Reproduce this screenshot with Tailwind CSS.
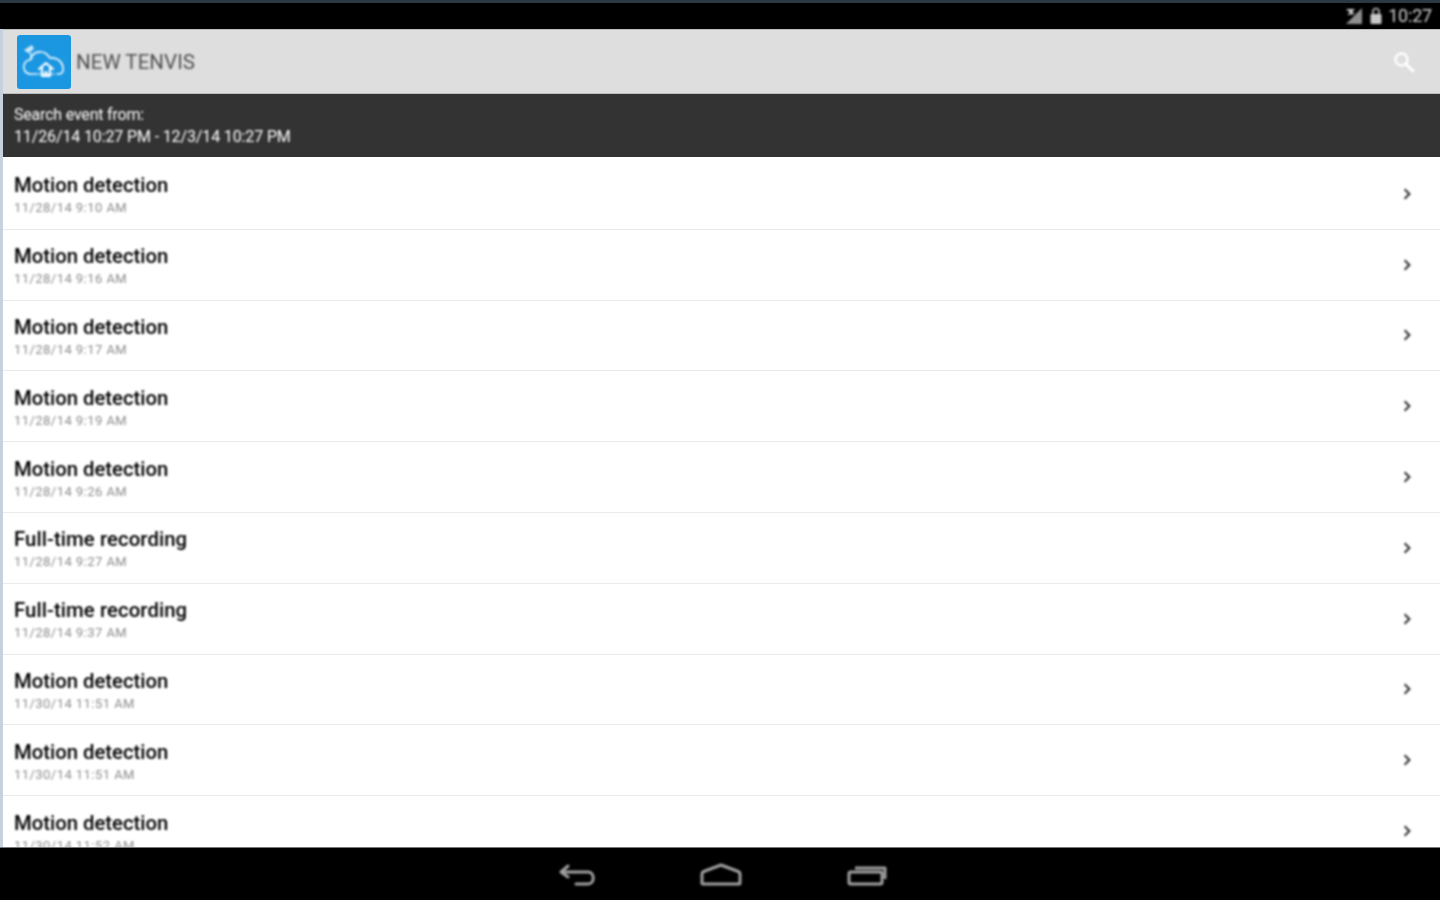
<!doctype html>
<html>
<head>
<meta charset="utf-8">
<script src="https://cdn.jsdelivr.net/npm/@tailwindcss/browser@4"></script>
</head>
<body class="m-0 bg-black">
<div class="flex h-[900px] w-[1440px] flex-col overflow-hidden bg-black font-['Roboto',sans-serif]">
  <div class="flex h-[29px] shrink-0 items-center justify-end gap-[5px] border-t-[3px] border-[#2c3842] bg-black pr-[8px]">
    <svg class="blur-[0.8px]" width="20" height="18" viewBox="0 0 20 18"><path d="M18 1v16H2z" fill="#8f8f8f"/><path d="M2 2h9l-3 3 3 2-8 1 3-2.5z" fill="#d0d0d0"/></svg>
    <svg class="blur-[0.8px]" width="14" height="18" viewBox="0 0 14 18"><path d="M4 7V4.5a3 3 0 0 1 6 0V7" fill="none" stroke="#bbb" stroke-width="1.6"/><rect x="1.5" y="7" width="11" height="10" rx="1" fill="#c8c8c8"/></svg>
    <span class="text-[18px] leading-none tracking-[-0.2px] text-[#d0d0d0] blur-[0.8px]">10:27</span>
  </div>
  <div class="flex">
    <div class="w-[3px] shrink-0 bg-[#c6d1dd]"></div>
    <div class="flex h-[818px] min-w-0 flex-1 flex-col">
      <div class="flex h-[65px] shrink-0 items-center border-y border-[#bdbdbd] bg-[#dedede] pl-[14px] pr-[24px]">
        <div class="flex h-[54px] w-[54px] shrink-0 items-center justify-center rounded-[3px] bg-[#1b97e2]">
          <svg class="blur-[0.8px]" width="46" height="40" viewBox="0 0 46 40" fill="none" stroke="#eef8fd" stroke-width="1.6" stroke-linecap="round" stroke-linejoin="round">
            <path d="M15 32H10C4 32 2 27 3 23c1-3 3-5 6-5 1-5 6-9 11-8 4 0 7 3 9 6 6-1 12 3 13 9 1 4-1 7-4 7h-2"/>
            <path d="M16 32h17" opacity=".7"/>
            <path d="M3 8l8-5 2 4-6 4z" fill="#cfe9f8" stroke="none"/>
            <path d="M9 10l2 7" stroke-width="1.2"/>
            <path d="M18 27l7-6 7 6M21 25v9h8v-9" stroke-width="2" stroke="#fff"/>
            <path d="M24 34v-4h2v4" stroke-width="1.4" stroke="#fff"/>
          </svg>
        </div>
        <span class="ml-[5px] mt-[2px] text-[20.6px] leading-none text-[#505050] blur-[0.8px]">NEW TENVIS</span>
        <svg class="ml-auto blur-[0.8px]" width="24" height="24" viewBox="0 0 24 24" fill="none" stroke="#ffffff" stroke-linecap="round"><circle cx="9.5" cy="9.5" r="6" stroke-width="2.4"/><path d="M14 14l7 7" stroke-width="3"/></svg>
      </div>
      <div class="flex h-[63px] shrink-0 flex-col justify-center gap-[4px] bg-[#333333] pl-[11px] text-[#ffffff]">
        <span class="text-[16px] leading-[18px] tracking-[-0.2px] blur-[0.8px]">Search event from:</span>
        <span class="text-[16px] leading-[18px] tracking-[-0.13px] blur-[0.8px]">11/26/14 10:27 PM - 12/3/14 10:27 PM</span>
      </div>
      <div class="min-h-0 flex-1 overflow-hidden bg-white pt-[2px]">
        <div class="flex h-[70.8px] items-center justify-between border-b border-[#ebebeb] pl-[11px] pr-[29px]"><div class="mt-[2px] flex flex-col blur-[0.8px]"><span class="text-[20.3px] leading-[24px] font-medium text-[#000000]">Motion detection</span><span class="mt-[3px] text-[13px] leading-[16px] tracking-[0.45px] text-[#8c8c8c]">11/28/14 9:10 AM</span></div><svg class="blur-[0.8px]" width="8" height="14" viewBox="0 0 10 16" fill="none" stroke="#333" stroke-width="2.6"><path d="M2 2l6 6-6 6"/></svg></div>
        <div class="flex h-[70.8px] items-center justify-between border-b border-[#ebebeb] pl-[11px] pr-[29px]"><div class="mt-[2px] flex flex-col blur-[0.8px]"><span class="text-[20.3px] leading-[24px] font-medium text-[#000000]">Motion detection</span><span class="mt-[3px] text-[13px] leading-[16px] tracking-[0.45px] text-[#8c8c8c]">11/28/14 9:16 AM</span></div><svg class="blur-[0.8px]" width="8" height="14" viewBox="0 0 10 16" fill="none" stroke="#333" stroke-width="2.6"><path d="M2 2l6 6-6 6"/></svg></div>
        <div class="flex h-[70.8px] items-center justify-between border-b border-[#ebebeb] pl-[11px] pr-[29px]"><div class="mt-[2px] flex flex-col blur-[0.8px]"><span class="text-[20.3px] leading-[24px] font-medium text-[#000000]">Motion detection</span><span class="mt-[3px] text-[13px] leading-[16px] tracking-[0.45px] text-[#8c8c8c]">11/28/14 9:17 AM</span></div><svg class="blur-[0.8px]" width="8" height="14" viewBox="0 0 10 16" fill="none" stroke="#333" stroke-width="2.6"><path d="M2 2l6 6-6 6"/></svg></div>
        <div class="flex h-[70.8px] items-center justify-between border-b border-[#ebebeb] pl-[11px] pr-[29px]"><div class="mt-[2px] flex flex-col blur-[0.8px]"><span class="text-[20.3px] leading-[24px] font-medium text-[#000000]">Motion detection</span><span class="mt-[3px] text-[13px] leading-[16px] tracking-[0.45px] text-[#8c8c8c]">11/28/14 9:19 AM</span></div><svg class="blur-[0.8px]" width="8" height="14" viewBox="0 0 10 16" fill="none" stroke="#333" stroke-width="2.6"><path d="M2 2l6 6-6 6"/></svg></div>
        <div class="flex h-[70.8px] items-center justify-between border-b border-[#ebebeb] pl-[11px] pr-[29px]"><div class="mt-[2px] flex flex-col blur-[0.8px]"><span class="text-[20.3px] leading-[24px] font-medium text-[#000000]">Motion detection</span><span class="mt-[3px] text-[13px] leading-[16px] tracking-[0.45px] text-[#8c8c8c]">11/28/14 9:26 AM</span></div><svg class="blur-[0.8px]" width="8" height="14" viewBox="0 0 10 16" fill="none" stroke="#333" stroke-width="2.6"><path d="M2 2l6 6-6 6"/></svg></div>
        <div class="flex h-[70.8px] items-center justify-between border-b border-[#ebebeb] pl-[11px] pr-[29px]"><div class="mt-[2px] flex flex-col blur-[0.8px]"><span class="text-[20.3px] leading-[24px] font-medium tracking-[0.1px] text-[#000000]">Full-time recording</span><span class="mt-[3px] text-[13px] leading-[16px] tracking-[0.45px] text-[#8c8c8c]">11/28/14 9:27 AM</span></div><svg class="blur-[0.8px]" width="8" height="14" viewBox="0 0 10 16" fill="none" stroke="#333" stroke-width="2.6"><path d="M2 2l6 6-6 6"/></svg></div>
        <div class="flex h-[70.8px] items-center justify-between border-b border-[#ebebeb] pl-[11px] pr-[29px]"><div class="mt-[2px] flex flex-col blur-[0.8px]"><span class="text-[20.3px] leading-[24px] font-medium tracking-[0.1px] text-[#000000]">Full-time recording</span><span class="mt-[3px] text-[13px] leading-[16px] tracking-[0.45px] text-[#8c8c8c]">11/28/14 9:37 AM</span></div><svg class="blur-[0.8px]" width="8" height="14" viewBox="0 0 10 16" fill="none" stroke="#333" stroke-width="2.6"><path d="M2 2l6 6-6 6"/></svg></div>
        <div class="flex h-[70.8px] items-center justify-between border-b border-[#ebebeb] pl-[11px] pr-[29px]"><div class="mt-[2px] flex flex-col blur-[0.8px]"><span class="text-[20.3px] leading-[24px] font-medium text-[#000000]">Motion detection</span><span class="mt-[3px] text-[13px] leading-[16px] tracking-[0.45px] text-[#8c8c8c]">11/30/14 11:51 AM</span></div><svg class="blur-[0.8px]" width="8" height="14" viewBox="0 0 10 16" fill="none" stroke="#333" stroke-width="2.6"><path d="M2 2l6 6-6 6"/></svg></div>
        <div class="flex h-[70.8px] items-center justify-between border-b border-[#ebebeb] pl-[11px] pr-[29px]"><div class="mt-[2px] flex flex-col blur-[0.8px]"><span class="text-[20.3px] leading-[24px] font-medium text-[#000000]">Motion detection</span><span class="mt-[3px] text-[13px] leading-[16px] tracking-[0.45px] text-[#8c8c8c]">11/30/14 11:51 AM</span></div><svg class="blur-[0.8px]" width="8" height="14" viewBox="0 0 10 16" fill="none" stroke="#333" stroke-width="2.6"><path d="M2 2l6 6-6 6"/></svg></div>
        <div class="flex h-[70.8px] items-center justify-between border-b border-[#ebebeb] pl-[11px] pr-[29px]"><div class="mt-[2px] flex flex-col blur-[0.8px]"><span class="text-[20.3px] leading-[24px] font-medium text-[#000000]">Motion detection</span><span class="mt-[3px] text-[13px] leading-[16px] tracking-[0.45px] text-[#8c8c8c]">11/30/14 11:52 AM</span></div><svg class="blur-[0.8px]" width="8" height="14" viewBox="0 0 10 16" fill="none" stroke="#333" stroke-width="2.6"><path d="M2 2l6 6-6 6"/></svg></div>
      </div>
    </div>
  </div>
  <div class="flex h-[53px] shrink-0 items-center justify-center gap-[104px] border-t border-[#777] bg-black pl-[5px] pt-[2px]">
    <svg class="blur-[0.8px]" width="38" height="24" viewBox="0 0 38 24" fill="none" stroke="#a0a0a0" stroke-width="3" stroke-linecap="round" stroke-linejoin="round"><path d="M11 3L4 9l7 5"/><path d="M5 9h26c7 0 7 12 0 12H19"/></svg>
    <svg class="blur-[0.8px]" width="44" height="24" viewBox="0 0 44 24" fill="none" stroke="#a0a0a0" stroke-width="3" stroke-linejoin="round"><path d="M3 11Q3 9 6 8L22 2l16 6q3 1 3 3v9q0 1-1 1H4q-1 0-1-1z"/></svg>
    <svg class="blur-[0.8px]" width="42" height="24" viewBox="0 0 42 24" fill="none" stroke="#a0a0a0" stroke-width="3" stroke-linejoin="round"><rect x="2" y="9" width="33" height="12" rx="1.5"/><path d="M8 5h30v11"/></svg>
  </div>
</div>
</body>
</html>
